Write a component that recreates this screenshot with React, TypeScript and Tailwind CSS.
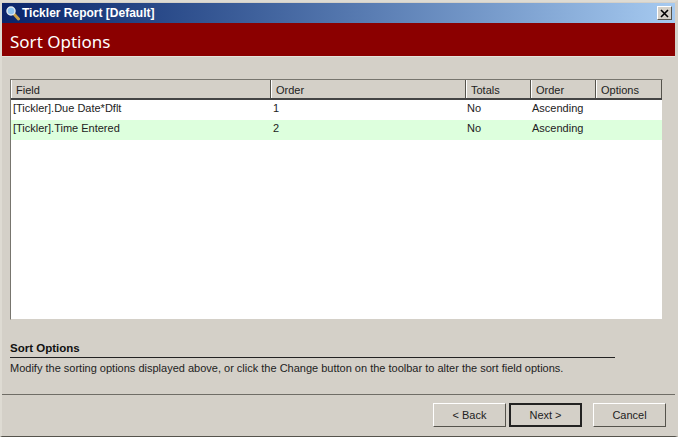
const columns = [
  { label: "Field", width: "w-[260px]" },
  { label: "Order", width: "w-[195px]" },
  { label: "Totals", width: "w-[65px]" },
  { label: "Order", width: "w-[65px]" },
  { label: "Options", width: "flex-1" },
];

const rows = [
  { field: "[Tickler].Due Date*Dflt", order: "1", totals: "No", dir: "Ascending", bg: "bg-white" },
  { field: "[Tickler].Time Entered", order: "2", totals: "No", dir: "Ascending", bg: "bg-[#ddffdd]" },
];

const Bevel = "border border-t-white border-l-white border-r-[#55534c] border-b-[#55534c]";

const App = () => {
  return (
    <div className="font-['Liberation_Sans',sans-serif] w-[678px] h-[437px] flex flex-col bg-[#d4d0c8] text-[11px] leading-[16px] text-[#222] border-l-2 border-r-[3px] border-t-[2px] border-b border-l-[#dedbd3] border-r-[#d4d0c8] border-t-[#dedbd3] border-b-[#55534c] overflow-hidden">
      <div className="h-[20px] mt-[1px] flex items-center bg-gradient-to-r from-[#0a246a] to-[#a6caf0] pl-[3px] pr-[3px]">
        <svg width="16" height="16" viewBox="0 0 16 16">
          <path d="M8.5 8.5l5 5.5" stroke="#c9a24a" strokeWidth="3" strokeLinecap="round" />
          <circle cx="6" cy="6" r="4" fill="#8fc4ef" stroke="#dfe8f0" strokeWidth="1.5" />
        </svg>
        <span className="ml-[1px] text-white font-bold text-[12px] whitespace-nowrap">Tickler Report [Default]</span>
        <div className={`ml-auto w-[15px] h-[14px] bg-[#d4d0c8] flex items-center justify-center ${Bevel}`}>
          <svg width="10" height="9" viewBox="0 0 10 9">
            <path d="M1 1l7 7M8 1l-7 7" stroke="#000" strokeWidth="1.6" />
          </svg>
        </div>
      </div>
      <div className="h-[34px] flex items-center bg-[#8b0000] text-white text-[17px] font-['Noto_Sans',sans-serif] pl-[8px] pt-[5px] border-b border-b-[#e5e2dc]">
        Sort Options
      </div>
      <div className="pl-[8px] pt-[22px] pr-[12px]">
        <div className="w-[653px] h-[241px] bg-white border border-t-[#77756e] border-l-[#77756e] border-r-[#d4d0c8] border-b-[#d4d0c8] flex flex-col">
          <div className="h-[20px] flex bg-[#d4d0c8] border-b-2 border-b-[#444]">
            {columns.map((col, i) => (
              <div key={i} className={`${col.width} flex items-center pl-[4px] pt-[1px] border-l border-l-white border-r border-r-[#55534c]`}>
                {col.label}
              </div>
            ))}
          </div>
          {rows.map((row, i) => (
            <div key={i} className={`${row.bg} h-[20px] flex items-center pb-[5px]`}>
              <div className="w-[260px] pl-[2px]">{row.field}</div>
              <div className="w-[194px] pl-[2px]">{row.order}</div>
              <div className="w-[66px] pl-[2px]">{row.totals}</div>
              <div className="pl-[1px]">{row.dir}</div>
            </div>
          ))}
        </div>
        <div className="mt-[21px] w-[605px] border-b border-b-[#222] font-bold text-[11.5px] leading-[15px] h-[17px] text-[#111]">Sort Options</div>
        <div className="mt-[2px] whitespace-nowrap">
          Modify the sorting options displayed above, or click the Change button on the toolbar to alter the sort field options.
        </div>
      </div>
      <div className="mt-[18px] h-[1px] bg-[#6f6d66]" />
      <div className="flex-1 flex justify-end items-start pt-[8px] pr-[9px]">
        <div className={`w-[73px] h-[24px] flex items-center justify-center ${Bevel}`}>&lt; Back</div>
        <div className="ml-[3px] w-[73px] h-[24px] flex items-center justify-center border-2 border-[#222]">Next &gt;</div>
        <div className={`ml-[11px] w-[73px] h-[24px] flex items-center justify-center ${Bevel}`}>Cancel</div>
      </div>
    </div>
  );
};

export default App;
